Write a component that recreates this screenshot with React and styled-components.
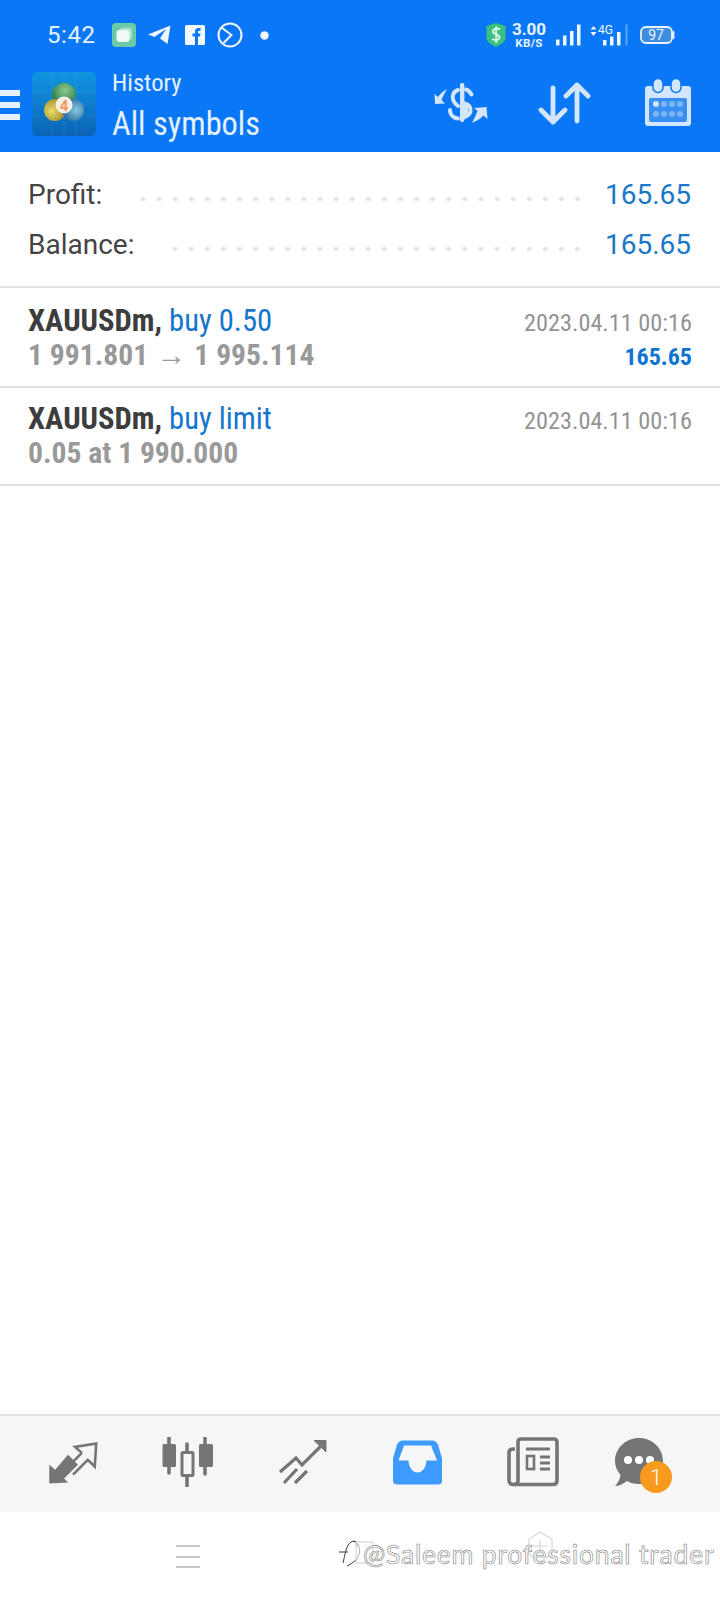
import React from "react";
import styled, { createGlobalStyle } from "styled-components";

const Global = createGlobalStyle`
  html, body { margin: 0; padding: 0; background: #fff; }
  * { box-sizing: border-box; }
  body { font-family: Roboto, "Noto Sans", sans-serif; }
`;

const Page = styled.div`
  width: 720px;
  height: 1600px;
  display: flex;
  flex-direction: column;
  background: #fff;
  overflow: hidden;
`;

const Header = styled.header`
  height: 152px;
  background: #0a78f6;
  display: flex;
  flex-direction: column;
`;

const StatusBar = styled.div`
  height: 70px;
  display: flex;
  align-items: center;
  padding-left: 47px;
  color: #e6f1ff;
`;

const Clock = styled.span`
  font-size: 24px;
  width: 65px;
  letter-spacing: 0.6px;
`;

const StatusIcon = styled.svg`
  display: block;
  flex: none;
  margin-left: ${(p) => p.$gap || 0}px;
  margin-top: ${(p) => p.$top || 0}px;
`;

const Speed = styled.div`
  margin-left: 5px;
  width: 36px;
  display: flex;
  flex-direction: column;
  align-items: center;
  font-weight: 700;
  span { display: block; }
  span:first-child { font-size: 17px; line-height: 15px; }
  span:last-child { font-size: 11.5px; line-height: 11px; letter-spacing: 0.4px; margin-top: 1px; }
`;

const Toolbar = styled.div`
  flex: 1;
  display: flex;
  align-items: flex-start;
  color: #e6f1ff;
`;

const Burger = styled.div`
  width: 32px;
  height: 30px;
  margin-top: 20px;
  display: flex;
  flex-direction: column;
  justify-content: space-between;
  &::before, &::after, span {
    content: "";
    display: block;
    width: 20px;
    height: 6px;
    background: #e6f1ff;
  }
`;

const Logo = styled.svg`
  display: block;
  flex: none;
  margin-top: 2px;
`;

const Titles = styled.div`
  margin-left: 16px;
  display: flex;
  flex-direction: column;
`;

const Narrow = styled.span`
  display: block;
  white-space: nowrap;
  font-stretch: condensed;
`;

const TitleSmall = styled(Narrow)`
  font-size: 24.6px;
  line-height: 28px;
  margin-top: -1px;
`;

const TitleBig = styled(Narrow)`
  font-size: 32.4px;
  line-height: 40px;
  margin-top: 7px;
`;

const Actions = styled.div`
  margin-left: auto;
  padding: 8px 28px 0 0;
  display: flex;
  align-items: flex-start;
`;

const Summary = styled.section`
  height: 136px;
  padding: 17px 29px 0 28px;
  border-bottom: 2px solid #e2e2e2;
`;

const SummaryRow = styled.div`
  height: 50px;
  display: flex;
  align-items: center;
  font-size: 28px;
  color: #444;
`;

const Leader = styled.div`
  flex: 1;
  height: 6px;
  margin: 9px 19px 0 ${(p) => p.$inset}px;
  background: radial-gradient(circle, #e4e4e4 2px, transparent 2.6px) right center / 16.1px 6px repeat-x;
`;

const Value = styled.span`
  color: #1a78c8;
`;

const Deal = styled.article`
  height: ${(p) => p.$h}px;
  padding: ${(p) => p.$pad}px 28px 0 28px;
  display: grid;
  grid-template-columns: 1fr auto;
  grid-auto-rows: 34.5px;
  border-bottom: 2px solid #e2e2e2;
  align-items: center;
`;

const Symbol = styled(Narrow)`
  font-size: 30.6px;
  font-weight: 700;
  color: #3d3d3d;
  em { font-style: normal; font-weight: 400; color: #1576cc; }
`;

const Prices = styled(Narrow)`
  font-size: 29.6px;
  font-weight: 700;
  color: #999;
`;

const Arrow = styled.span`
  margin: 0 1.5px;
`;

const DateText = styled(Narrow)`
  font-size: 24.3px;
  padding-top: 5px;
  color: #939393;
  text-align: right;
`;

const Profit = styled(Narrow)`
  font-size: 24px;
  padding-top: 5px;
  font-weight: 700;
  color: #0d74d1;
  text-align: right;
`;

const Spacer = styled.div`
  flex: 1;
`;

const TabBar = styled.nav`
  height: 98px;
  padding: 0 15px 4px;
  background: #f6f6f6;
  border-top: 2px solid #e4e4e4;
  display: grid;
  grid-template-columns: repeat(6, 115px);
  align-items: center;
  justify-items: center;
`;

const Tab = styled.div`
  position: relative;
  display: flex;
  margin-left: ${(p) => p.$shift || 0}px;
`;

const Badge = styled.div`
  position: absolute;
  right: -8px;
  bottom: -6px;
  width: 32px;
  height: 32px;
  border-radius: 50%;
  background: #f79a1e;
  color: #fff;
  font-size: 22px;
  font-weight: 300;
  display: flex;
  align-items: center;
  justify-content: center;
`;

const NavBar = styled.div`
  position: relative;
  height: 88px;
  display: flex;
  align-items: center;
  padding: 0 0 0 176px;
`;

const SoftMenu = styled.div`
  width: 24px;
  height: 23px;
  margin-top: 1px;
  display: flex;
  flex-direction: column;
  justify-content: space-between;
  &::before, &::after, span {
    content: "";
    display: block;
    height: 2px;
    background: #c6c6c6;
  }
`;

const Watermark = styled.div`
  position: absolute;
  left: 337px;
  top: 24px;
  display: flex;
  align-items: center;
  height: 36px;
  opacity: 0.95;
`;

const WatermarkText = styled.span`
  font-family: Lato, "Noto Sans", sans-serif;
  font-size: 26.5px;
  font-weight: 400;
  letter-spacing: 0.8px;
  white-space: nowrap;
  color: #fff;
  -webkit-text-stroke: 0.6px #777;
`;

const Ghost = styled.svg`
  position: absolute;
  left: 526px;
  top: 18px;
`;

const Scribble = styled.svg`
  flex: none;
  margin-right: -14px;
`;

const AppIcon = () => (
  <StatusIcon width="24" height="24" viewBox="0 0 24 24">
    <rect width="24" height="24" rx="4" fill="#6cc9a8" />
    <rect x="8" y="4.5" width="12" height="12" rx="3" fill="#a5e0cc" />
    <rect x="4.5" y="7" width="13" height="12" rx="3" fill="#eefaf6" />
  </StatusIcon>
);

const TelegramIcon = () => (
  <StatusIcon $gap={12} width="23" height="20" viewBox="0 0 23 20">
    <path d="M0 9.5 L22.5 0.5 L19.5 19 L12 13.5 L18 4 L6.5 12 Z" fill="#eef6ff" />
  </StatusIcon>
);

const FacebookIcon = () => (
  <StatusIcon $gap={14} width="20" height="20" viewBox="0 0 20 20">
    <rect width="20" height="20" rx="1.5" fill="#f4f9ff" />
    <path d="M10 20 V11.5 H7.5 V8.5 H10 V6.5 C10 4 11.5 3 13.5 3 H15.5 V6 H14 C13.2 6 13 6.4 13 7 V8.5 H15.5 L15 11.5 H13 V20 Z" fill="#0a78f6" />
  </StatusIcon>
);

const SwirlIcon = () => (
  <StatusIcon $gap={12} width="26" height="26" viewBox="0 0 26 26">
    <circle cx="13" cy="13" r="11.5" fill="none" stroke="#f0f7ff" strokeWidth="2" />
    <path d="M4.5 5.5 L14.5 13 L6.5 21" fill="none" stroke="#f0f7ff" strokeWidth="2" />
  </StatusIcon>
);

const DotIcon = () => (
  <StatusIcon $gap={17} width="9" height="9" viewBox="0 0 9 9">
    <circle cx="4.5" cy="4.5" r="4.2" fill="#f0f7ff" />
  </StatusIcon>
);

const ShieldIcon = () => (
  <StatusIcon $gap={217} width="20" height="24" viewBox="0 0 20 24">
    <path d="M0.5 3 L10 0 L19.5 3 V15 C19.5 19 14 22 10 24 C6 22 0.5 19 0.5 15 Z" fill="#3cc07f" />
    <path d="M14 6.5 C12 5 7 5 7 8.5 C7 12 13.5 11 13.5 14.5 C13.5 17.5 8.5 17.5 6 16 M10.2 3.5 V20" fill="none" stroke="#d8f7e6" strokeWidth="1.9" />
  </StatusIcon>
);

const SignalIcon = () => (
  <StatusIcon $gap={9} width="25" height="22" viewBox="0 0 25 22">
    <path d="M0 15.5 h3.5 v6 h-3.5 Z M7 11.5 h3.5 v10 h-3.5 Z M14 7 h3.5 v14.5 h-3.5 Z M21 0.5 h3.5 v21 h-3.5 Z" fill="#f0f7ff" />
  </StatusIcon>
);

const MobileIcon = () => (
  <StatusIcon $gap={9} width="38" height="22" viewBox="0 0 38 22">
    <path d="M3.5 2 L6.5 5.5 H0.5 Z M3.5 12 L0.5 8 H6.5 Z" fill="#f0f7ff" />
    <text x="8" y="10" fontFamily="Roboto" fontSize="12" fill="#f0f7ff">4G</text>
    <path d="M13 16 h3.5 v5.5 h-3.5 Z M20 12.5 h3.5 v9 h-3.5 Z M27 8 h3.5 v13.5 h-3.5 Z" fill="#f0f7ff" />
    <rect x="35.5" y="0.5" width="2" height="21" fill="#5ba3f5" />
  </StatusIcon>
);

const BatteryIcon = () => (
  <StatusIcon $gap={12} width="35" height="18" viewBox="0 0 35 18">
    <rect x="1" y="1" width="31" height="16" rx="5" fill="#3d8de0" stroke="#eaf3ff" strokeWidth="1.8" />
    <path d="M33.5 6 V12" stroke="#eaf3ff" strokeWidth="1.8" strokeLinecap="round" />
    <text x="16" y="14" textAnchor="middle" fontFamily="Roboto" fontSize="14" fill="#eaf3ff">97</text>
  </StatusIcon>
);

const MetaLogo = () => (
  <Logo width="64" height="64" viewBox="0 0 64 64">
    <defs>
      <linearGradient id="tile" x1="0" y1="0" x2="0" y2="1">
        <stop offset="0" stopColor="#1195e0" />
        <stop offset="1" stopColor="#0b63b8" />
      </linearGradient>
      <radialGradient id="leaf" cx="0.55" cy="0.3" r="0.7">
        <stop offset="0" stopColor="#8ccb8c" />
        <stop offset="1" stopColor="#246f42" />
      </radialGradient>
      <radialGradient id="sun" cx="0.35" cy="0.55" r="0.7">
        <stop offset="0" stopColor="#ecdc6e" />
        <stop offset="1" stopColor="#94841c" />
      </radialGradient>
      <radialGradient id="sea" cx="0.65" cy="0.5" r="0.7">
        <stop offset="0" stopColor="#8ac6de" />
        <stop offset="1" stopColor="#1a6398" />
      </radialGradient>
    </defs>
    <rect width="64" height="64" rx="5" fill="url(#tile)" />
    <path d="M20 0 V64 M32 0 V64 M44 0 V64 M0 20 H64 M0 32 H64 M0 44 H64" stroke="#7cc4ee" strokeOpacity="0.15" strokeWidth="1" />
    <circle cx="32" cy="23" r="12" fill="url(#leaf)" />
    <circle cx="23" cy="38" r="11" fill="url(#sun)" />
    <circle cx="41" cy="38" r="11" fill="url(#sea)" />
    <circle cx="32" cy="33" r="8.5" fill="#f6efe6" />
    <text x="32" y="38.5" textAnchor="middle" fontFamily="Roboto" fontWeight="700" fontSize="15" fill="#ee9a5a">4</text>
  </Logo>
);

const pale = "#d3e6fd";

const DollarIcon = () => (
  <StatusIcon $top={2} width="60" height="46" viewBox="0 0 60 46">
    <rect x="30" y="3" width="4.4" height="39" rx="2" fill={pale} />
    <path d="M28 10 C22 12 20 20 28 26 M20 30 C20 35 24 38 28 38.5 M36 9.5 C38 10 40 12 41.5 14.5 M36 24 C42 26 42 34 36 36.5 Z" fill="none" stroke={pale} strokeWidth="4" strokeLinecap="round" />
    <path d="M5 24 L4.5 14 L8 17 C10 14 13 11 17 9 C15 13 13 16 11.5 20 L15 23.5 Z" fill={pale} />
    <path d="M56.5 27 L57.5 39 L53.5 35.5 C51 38 47 41 42 43 C44 39 46 35 47.5 31 L44 28 Z" fill={pale} />
  </StatusIcon>
);

const SortIcon = () => (
  <StatusIcon $gap={47} $top={3} width="54" height="46" viewBox="0 0 54 46">
    <path d="M16 7 V40 M4 29 L16 41 L28 29 M40 40 V5 M29 15 L40 4 L51 15" fill="none" stroke={pale} strokeWidth="4.8" strokeLinecap="round" strokeLinejoin="round" />
  </StatusIcon>
);

const CalendarIcon = () => (
  <StatusIcon $gap={53} width="48" height="50" viewBox="0 0 48 50">
    <rect x="1" y="8" width="46" height="40" rx="3" fill={pale} />
    <rect x="9" y="0.5" width="10" height="14" rx="5" fill={pale} stroke="#0a78f6" strokeWidth="1.5" />
    <rect x="27" y="0.5" width="10" height="14" rx="5" fill={pale} stroke="#0a78f6" strokeWidth="1.5" />
    <rect x="5" y="20" width="38" height="24" rx="2" fill="#3a90f0" />
    {[12, 20, 28, 36].map((x, i) => (
      <React.Fragment key={x}>
        <circle cx={x} cy="26" r="3" fill={i === 0 ? "#d3e6fd" : "#7fb5f4"} />
        <circle cx={x} cy="36" r="3" fill="#7fb5f4" />
      </React.Fragment>
    ))}
  </StatusIcon>
);

const grey = "#757575";

const TradeIcon = () => (
  <svg width="50" height="44" viewBox="48 1440 50 44.5">
    <path d="M49 1465 L55 1470 L68 1455 L78 1465 L64 1479 L68 1483 L49 1484 Z" fill={grey} />
    <path d="M82 1453 L75 1447 L96.5 1443.5 L95 1467 L88 1460 L73 1475 M82 1453 L72 1463" fill="none" stroke={grey} strokeWidth="2.6" />
  </svg>
);

const CandleIcon = () => (
  <svg width="54" height="50" viewBox="162 1437 54 50">
    <path d="M170 1438 V1473 M188 1444 V1486 M206 1438 V1474" stroke={grey} strokeWidth="3.6" strokeLinecap="round" />
    <rect x="163.5" y="1444" width="13.5" height="23" rx="1.5" fill={grey} />
    <rect x="200" y="1444" width="14" height="23" rx="1.5" fill={grey} />
    <rect x="183" y="1452.5" width="11" height="23" rx="1" fill="#f6f6f6" stroke={grey} strokeWidth="3" />
  </svg>
);

const TrendIcon = () => (
  <svg width="50" height="46" viewBox="279 1439 50 46">
    <path d="M281 1472 L297 1458 L303 1465 L325 1443 M285 1483 L298 1469 M296 1483 L308 1471" fill="none" stroke={grey} strokeWidth="3.2" />
    <path d="M315 1440.5 H327 V1452 Z" fill={grey} stroke={grey} strokeWidth="1" />
  </svg>
);

const InboxIcon = () => (
  <svg width="50" height="45" viewBox="394 1439.5 50 45">
    <path d="M404 1440 H433 C436 1440 438 1442 439 1444 L443 1458 V1480 C443 1483 441 1484 439 1484 H398 C396 1484 394 1483 394 1480 V1458 L398 1444 C399 1442 401 1440 404 1440 Z" fill="#3d9bff" />
    <path d="M399.5 1460 L405 1445 H432 L438 1460 H427.5 C427 1468 423 1472 418.5 1472 C414 1472 410 1468 409.5 1460 Z" fill="#f6f6f6" />
  </svg>
);

const NewsIcon = () => (
  <svg width="52" height="50" viewBox="508 1437 52 50">
    <path d="M516 1449 H514 C511 1449 510 1451 510 1453 V1480 C510 1483 512 1484.5 514 1484.5 H554 C556.5 1484.5 558 1483 558 1481 V1442 C558 1440 556.5 1439 555 1439 H522 C520 1439 519 1440 519 1442 V1481 C519 1483 517 1484.5 514 1484.5" fill="none" stroke={grey} strokeWidth="3.6" />
    <path d="M527 1449 H551 M541 1457 H551 M541 1463 H551 M541 1469 H551" stroke={grey} strokeWidth="3" />
    <rect x="528" y="1456" width="7" height="13" fill="none" stroke={grey} strokeWidth="2.6" />
  </svg>
);

const ChatIcon = () => (
  <svg width="50" height="50" viewBox="614 1437 50 50">
    <path d="M639 1438 C652 1438 663 1448 663 1461 C663 1475 652 1484 639 1484 C634 1484 630 1483 627 1481 C623 1484 619 1486 615 1486 C618 1483 620 1479 620.5 1475 C617 1471 615 1466 615 1461 C615 1448 626 1438 639 1438 Z" fill={grey} />
    <circle cx="628" cy="1460" r="4" fill="#fff" />
    <circle cx="639" cy="1460" r="4" fill="#fff" />
    <circle cx="650" cy="1460" r="4" fill="#fff" />
  </svg>
);

export default function App() {
  return (
    <Page>
      <Global />
      <Header>
        <StatusBar>
          <Clock>5:42</Clock>
          <AppIcon />
          <TelegramIcon />
          <FacebookIcon />
          <SwirlIcon />
          <DotIcon />
          <ShieldIcon />
          <Speed>
            <span>3.00</span>
            <span>KB/S</span>
          </Speed>
          <SignalIcon />
          <MobileIcon />
          <BatteryIcon />
        </StatusBar>
        <Toolbar>
          <Burger><span /></Burger>
          <MetaLogo />
          <Titles>
            <TitleSmall>History</TitleSmall>
            <TitleBig>All symbols</TitleBig>
          </Titles>
          <Actions>
            <DollarIcon />
            <SortIcon />
            <CalendarIcon />
          </Actions>
        </Toolbar>
      </Header>

      <Summary>
        <SummaryRow>
          <span>Profit:</span>
          <Leader $inset={33} />
          <Value>165.65</Value>
        </SummaryRow>
        <SummaryRow>
          <span>Balance:</span>
          <Leader $inset={34} />
          <Value>165.65</Value>
        </SummaryRow>
      </Summary>

      <Deal $h={100} $pad={15}>
        <Symbol>XAUUSDm, <em>buy 0.50</em></Symbol>
        <DateText>2023.04.11 00:16</DateText>
        <Prices>1 991.801 <Arrow>→</Arrow> 1 995.114</Prices>
        <Profit>165.65</Profit>
      </Deal>
      <Deal $h={98} $pad={13}>
        <Symbol>XAUUSDm, <em>buy limit</em></Symbol>
        <DateText>2023.04.11 00:16</DateText>
        <Prices>0.05 at 1 990.000</Prices>
      </Deal>

      <Spacer />

      <TabBar>
        <Tab><TradeIcon /></Tab>
        <Tab><CandleIcon /></Tab>
        <Tab><TrendIcon /></Tab>
        <Tab $shift={1}><InboxIcon /></Tab>
        <Tab><NewsIcon /></Tab>
        <Tab $shift={-17}>
          <ChatIcon />
          <Badge>1</Badge>
        </Tab>
      </TabBar>
      <NavBar>
        <SoftMenu><span /></SoftMenu>
        <Ghost width="30" height="36" viewBox="0 0 30 36">
          <path d="M14 2 L26 9 V24 L14 32 L3 24 V9 Z M7 16 H22 M14 10 V24" fill="none" stroke="#d8d8d8" strokeWidth="1.2" />
        </Ghost>
        <Watermark>
          <Scribble width="40" height="30" viewBox="0 0 40 30">
            <path d="M6 24 C8 16 9 6 14 3 C18 1 21 3 20 8 M2 13 H11 M16 2 C24 4 24 14 20 20 C16 24 12 26 10 27" fill="none" stroke="#333" strokeWidth="1" />
            <rect x="19" y="3" width="17" height="21" fill="#fff" fillOpacity="0.6" stroke="#ccc" strokeWidth="1" />
          </Scribble>
          <WatermarkText>@Saleem professional trader</WatermarkText>
        </Watermark>
      </NavBar>
    </Page>
  );
}
